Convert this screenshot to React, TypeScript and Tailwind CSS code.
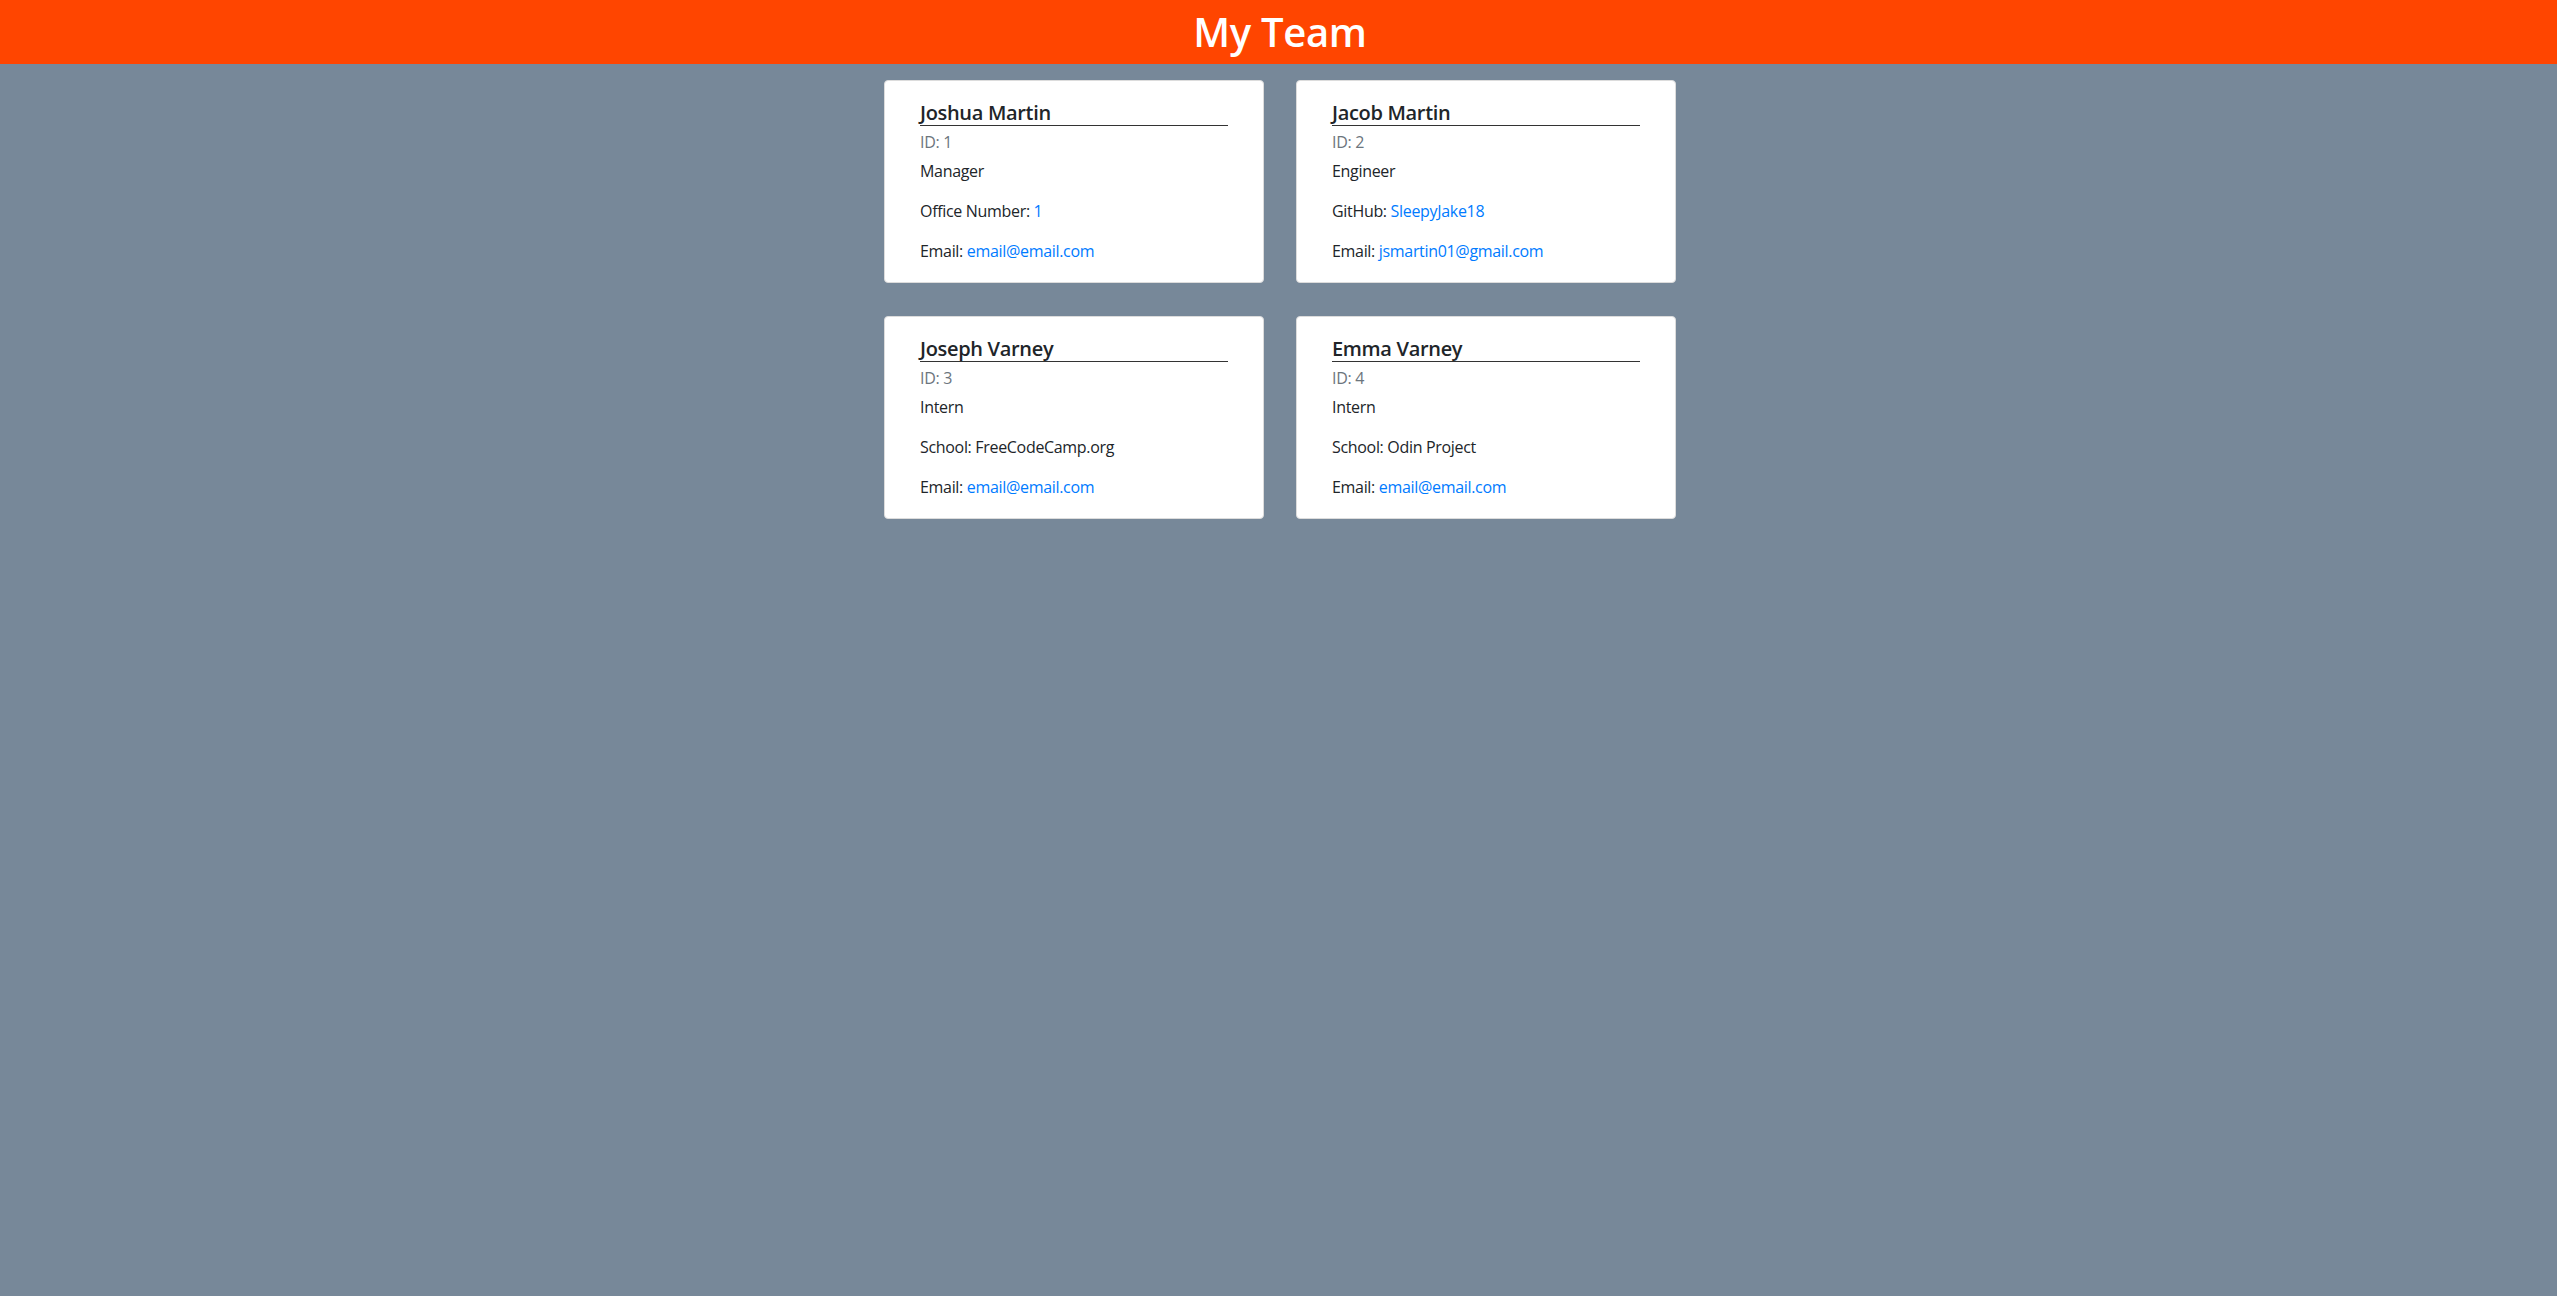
import React from "react";

type Member = {
  name: string;
  id: number;
  role: string;
  label: string;
  value: string;
  valueLink: boolean;
  email: string;
};

const members: Member[] = [
  { name: "Joshua Martin", id: 1, role: "Manager", label: "Office Number:", value: "1", valueLink: true, email: "email@email.com" },
  { name: "Jacob Martin", id: 2, role: "Engineer", label: "GitHub:", value: "SleepyJake18", valueLink: true, email: "jsmartin01@gmail.com" },
  { name: "Joseph Varney", id: 3, role: "Intern", label: "School:", value: "FreeCodeCamp.org", valueLink: false, email: "email@email.com" },
  { name: "Emma Varney", id: 4, role: "Intern", label: "School:", value: "Odin Project", valueLink: false, email: "email@email.com" },
];

function Card({ m }: { m: Member }) {
  return (
    <div className="w-[380px] h-[203px] bg-white rounded-[4px] border border-[#dcdcdc] px-[35px] pt-[20px]">
      <div className="text-[20px] leading-[24px] font-semibold text-[#212529] border-b border-[#333]">{m.name}</div>
      <div className="mt-[4px] text-[16px] leading-[24px] text-[#6c757d]">ID: {m.id}</div>
      <div className="mt-[5px] text-[16px] leading-[24px] text-[#212529]">{m.role}</div>
      <div className="mt-[16px] text-[16px] leading-[24px] text-[#212529]">
        {m.label}{" "}
        {m.valueLink ? <a className="text-[#007bff]">{m.value}</a> : <span>{m.value}</span>}
      </div>
      <div className="mt-[16px] text-[16px] leading-[24px] text-[#212529]">
        Email: <a className="text-[#007bff]">{m.email}</a>
      </div>
    </div>
  );
}

export default function App() {
  return (
    <div
      className="min-h-[1296px] bg-[#778899] tracking-[-0.02em]"
      style={{ fontFamily: '"Segoe UI", "Open Sans", "Noto Sans", sans-serif' }}
    >
      <header className="h-[64px] bg-[#ff4500] flex items-center justify-center pl-[3px]">
        <h1 className="text-[40px] leading-[48px] font-semibold text-white">My Team</h1>
      </header>
      <main className="pt-[16px] pl-[3px] flex justify-center">
        <div className="grid grid-cols-[380px_380px] gap-x-[32px] gap-y-[33px]">
          {members.map((m) => (
            <Card key={m.id} m={m} />
          ))}
        </div>
      </main>
    </div>
  );
}
